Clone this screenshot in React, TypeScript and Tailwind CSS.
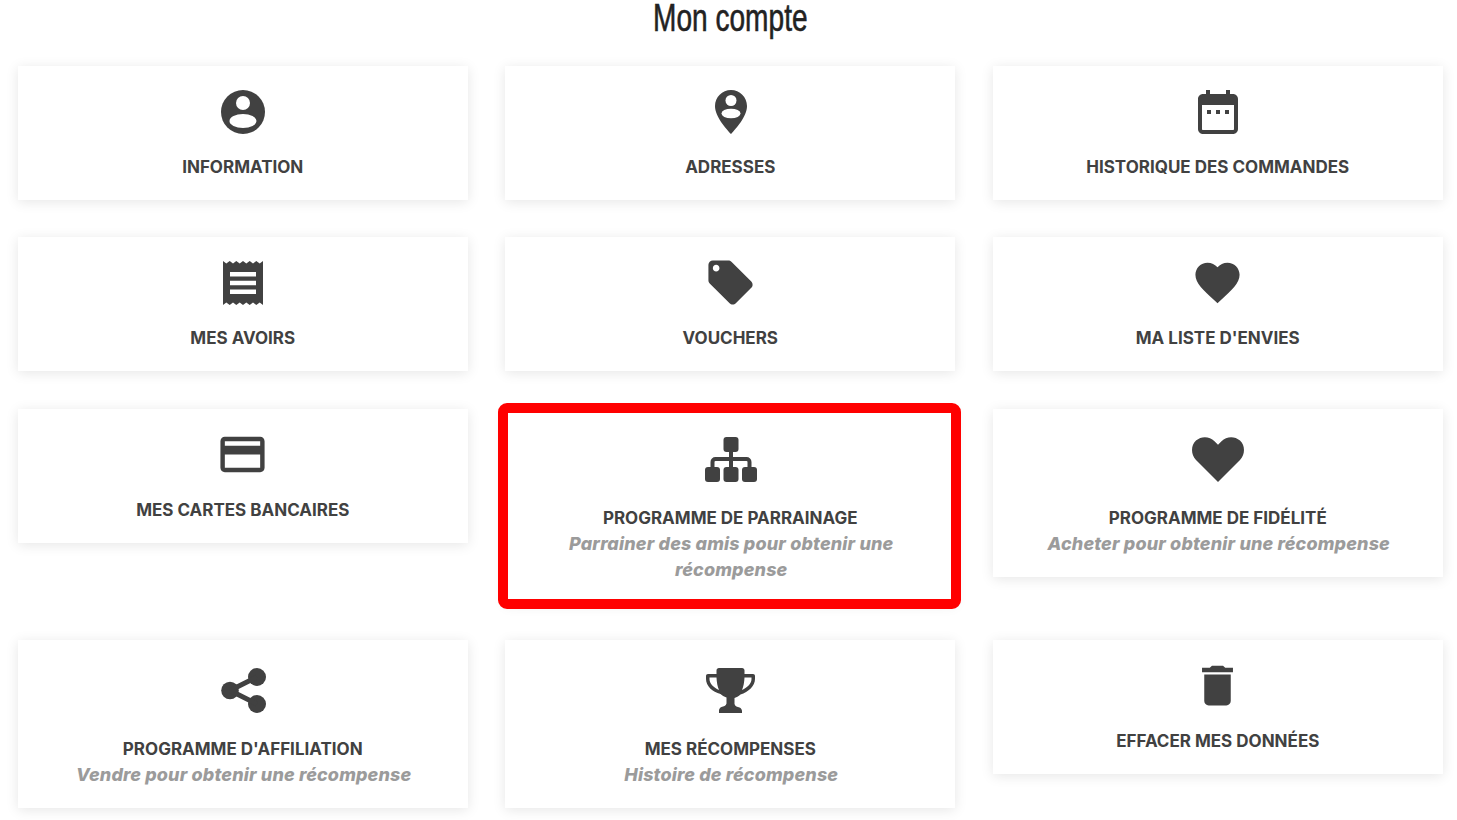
import { MdCreditCard, MdDelete, MdFavorite, MdLocalOffer } from "react-icons/md";
import type { ReactNode } from "react";

const AccountIcon = () => (
  <svg viewBox="0 0 44 44" className="w-[44px] h-[44px]">
    <circle cx="22" cy="22" r="22" fill="currentColor" />
    <circle cx="22" cy="13" r="7" fill="#fff" />
    <ellipse cx="22" cy="31" rx="13.500" ry="7" fill="#fff" />
  </svg>
);

const PinIcon = () => (
  <svg viewBox="0 0 32 44" className="w-[32px] h-[44px] ml-[2px]">
    <path d="M16 0C7.200 0 0 7.200 0 16c0 10.500 11 22.500 16 28 5-5.500 16-17.500 16-28C32 7.200 24.800 0 16 0z" fill="currentColor" />
    <circle cx="16" cy="10.500" r="5.500" fill="#fff" />
    <ellipse cx="16" cy="23.500" rx="9.500" ry="4.800" fill="#fff" />
  </svg>
);

const CalendarIcon = () => (
  <svg viewBox="0 0 40 44" className="w-[40px] h-[44px]">
    <path
      fillRule="evenodd"
      d="M8 0h4v4h16V0h4v4h3c2.800 0 5 2.200 5 5v30c0 2.800-2.200 5-5 5H5c-2.800 0-5-2.200-5-5V9c0-2.800 2.200-5 5-5h3V0zM4 15v24c0 .6.400 1 1 1h30c.6 0 1-.4 1-1V15H4z"
      fill="currentColor"
    />
    <rect x="9" y="20" width="4" height="4" fill="currentColor" />
    <rect x="18" y="20" width="4" height="4" fill="currentColor" />
    <rect x="27" y="20" width="4" height="4" fill="currentColor" />
  </svg>
);

const ReceiptIcon = () => (
  <svg viewBox="0 0 40 44" className="w-[40px] h-[44px]">
    <path
      fillRule="evenodd"
      d="M0 0l3.300 2.500L6.700 0 10 2.500 13.300 0l3.400 2.500L20 0l3.300 2.500L26.700 0 30 2.500 33.300 0l3.400 2.500L40 0v44l-3.300-2.500L33.300 44 30 41.500 26.700 44l-3.400-2.500L20 44l-3.300-2.500L13.300 44 10 41.500 6.700 44l-3.400-2.500L0 44V0zm7 11v4.500h26V11H7zm0 8.700v4.500h26v-4.500H7zm0 8.800V33h26v-4.500H7z"
      fill="currentColor"
    />
  </svg>
);

const SitemapIcon = () => (
  <svg viewBox="0 0 52 45" className="w-[52px] h-[45px] ml-[2px]" fill="currentColor">
    <rect x="18.500" y="0" width="15" height="15" rx="3" />
    <rect x="0" y="30" width="15" height="15" rx="3" />
    <rect x="18.500" y="30" width="15" height="15" rx="3" />
    <rect x="37" y="30" width="15" height="15" rx="3" />
    <path d="M26 14v17M7.500 31v-6c0-1.700 1.300-3 3-3h31c1.700 0 3 1.300 3 3v6" fill="none" stroke="currentColor" strokeWidth="4" />
  </svg>
);

const BigHeartIcon = () => (
  <svg viewBox="0 0 52 45" className="w-[52px] h-[45px]">
    <path
      d="M26 45L4 23C-1.300 17.500-1.300 8.500 4 3.600 9.500-1.400 17.500-.8 22.500 4.200L26 7.800l3.500-3.600c5-5 13-5.600 18.500-.6 5.300 4.900 5.300 13.900 0 19.400L26 45z"
      fill="currentColor"
    />
  </svg>
);

const ShareIcon = () => (
  <svg viewBox="0 0 45 45" className="w-[45px] h-[45px] ml-[2px]" fill="currentColor">
    <circle cx="9" cy="22.500" r="8.800" />
    <circle cx="36" cy="9" r="9" />
    <circle cx="36" cy="36" r="9" />
    <path d="M9 22.500L36 9M9 22.500L36 36" fill="none" stroke="currentColor" strokeWidth="5" />
  </svg>
);

const TrophyIcon = () => (
  <svg viewBox="0 0 49 45" className="w-[49px] h-[45px]" fill="currentColor">
    <path d="M13 0h23c1.500 0 2.500 1 2.500 2.500V6H47c1.200 0 2 .8 2 2v3c0 7-6.500 13-14.500 15.500-1.500 1.500-3.500 2.800-6 3.500v6c.5 2.500 3 3 5 3.500 1.500.5 2.500 2 2.500 3.500V45H13v-2.500c0-1.500 1-3 2.500-3.500 2-.5 4.500-1 5-3.500v-6c-2.500-.7-4.500-2-6-3.500C6.500 24 0 18 0 11V8c0-1.200.8-2 2-2h8.500V2.500C10.500 1 11.500 0 13 0zM3.500 9.500V11c0 4.500 3.800 8.500 9.500 11-1.500-3.500-2.300-8-2.500-12.500h-7zm42 0h-7c-.2 4.500-1 9-2.500 12.500 5.700-2.500 9.500-6.500 9.500-11V9.500z" />
  </svg>
);

type Item = {
  title: string;
  subtitle?: string;
  icon: ReactNode;
  big?: boolean;
  highlighted?: boolean;
};

const items: Item[] = [
  { title: "INFORMATION", icon: <AccountIcon /> },
  { title: "ADRESSES", icon: <PinIcon /> },
  { title: "HISTORIQUE DES COMMANDES", icon: <CalendarIcon /> },
  { title: "MES AVOIRS", icon: <ReceiptIcon /> },
  { title: "VOUCHERS", icon: <MdLocalOffer size={53} /> },
  { title: "MA LISTE D'ENVIES", icon: <MdFavorite size={53} /> },
  { title: "MES CARTES BANCAIRES", icon: <MdCreditCard size={53} /> },
  {
    title: "PROGRAMME DE PARRAINAGE",
    subtitle: "Parrainer des amis pour obtenir une récompense",
    icon: <SitemapIcon />,
    big: true,
    highlighted: true,
  },
  {
    title: "PROGRAMME DE FIDÉLITÉ",
    subtitle: "Acheter pour obtenir une récompense",
    icon: <BigHeartIcon />,
    big: true,
  },
  {
    title: "PROGRAMME D'AFFILIATION",
    subtitle: "Vendre pour obtenir une récompense",
    icon: <ShareIcon />,
    big: true,
  },
  {
    title: "MES RÉCOMPENSES",
    subtitle: "Histoire de récompense",
    icon: <TrophyIcon />,
    big: true,
  },
  { title: "EFFACER MES DONNÉES", icon: <MdDelete size={53} /> },
];

function Card({ item }: { item: Item }) {
  return (
    <a className="relative block bg-white text-center text-[#414141] shadow-[0_2px_12px_rgba(0,0,0,0.1)] pt-[19px] pb-5 px-5">
      <div className={`flex justify-center items-center mb-4 ${item.big ? "h-[61px] pt-[2px]" : "h-[53px]"}`}>
        {item.icon}
      </div>
      <div className="font-['Inter',sans-serif] font-bold text-[17px] leading-[26px]">{item.title}</div>
      {item.subtitle && (
        <div className="font-['Inter',sans-serif] font-extrabold italic text-[18px] leading-[26px] tracking-[0.15px] text-[#9b9b9b] pl-[32px] pr-[30px]">
          {item.subtitle}
        </div>
      )}
      {item.highlighted && (
        <div className="absolute -left-[7px] -right-[6px] -top-[6px] -bottom-[6px] border-[10px] border-[#ff0000] rounded-[9px]"></div>
      )}
    </a>
  );
}

export default function App() {
  return (
    <div className="bg-white min-h-[820px] overflow-hidden">
      <h1 className="font-['Liberation_Sans',sans-serif] text-[39px] leading-[36px] text-center text-[#222] h-[66px] pl-[5px] scale-x-[0.72] [-webkit-text-stroke:0.6px_#222]">
        Mon compte
      </h1>
      <div className="grid grid-cols-[repeat(3,450px)] gap-x-[37.5px] gap-y-[37.4px] items-start pl-[17.75px]">
        {items.map((item) => (
          <Card key={item.title} item={item} />
        ))}
      </div>
    </div>
  );
}
